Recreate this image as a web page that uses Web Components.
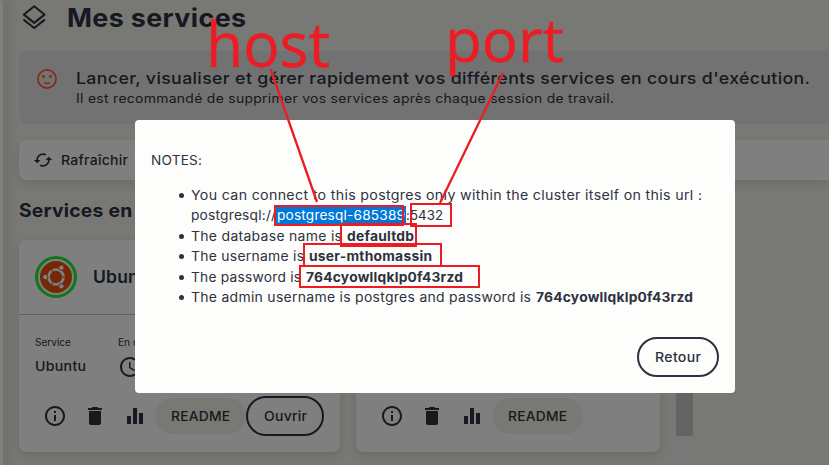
<!DOCTYPE html>
<html lang="fr">
<head>
<meta charset="utf-8">
<title>Mes services</title>
<style>
html,body{margin:0;padding:0;overflow:hidden}
body{font-family:Inter,"Liberation Sans",sans-serif;color:#2c323f;background:#f1f0e8}
</style>
</head>
<body>
<services-page></services-page>
<script>
const make = (name, html, setup) => customElements.define(name, class extends HTMLElement {
  connectedCallback() {
    if (this.shadowRoot) return;
    const t = document.createElement('template');
    t.innerHTML = html;
    this.attachShadow({mode: 'open'}).appendChild(t.content.cloneNode(true));
    if (setup) setup(this, this.shadowRoot);
  }
});

// Text widened to the width in its w attribute: partly by tracking, the rest by glyph width.
make('fit-text', `<style>:host{display:inline-block;white-space:pre;line-height:inherit}span{display:inline-block;transform-origin:0 50%}</style><span></span>`, (el, root) => {
  const s = root.querySelector('span');
  s.textContent = el.getAttribute('text');
  const w = +el.getAttribute('w');
  const n = s.textContent.length;
  const natural = s.getBoundingClientRect().width;
  const spacing = (w - natural) / n * 0.35;
  s.style.letterSpacing = spacing + 'px';
  s.style.transform = `scaleX(${w / (natural + spacing * (n - 1))})`;
  el.style.width = w + 'px';
});

const icons = {
  layers: ['0 0 24 24', '<path d="M12.200 1.200 22.500 9.600 12.200 17.900 1.900 9.600Z M1.500 14.600 12.200 23 22.900 14.600" fill="none" stroke="currentColor" stroke-width="2" stroke-linejoin="round"/>'],
  smile: ['0 0 24 24', '<circle cx="12" cy="12" r="9.1" fill="none" stroke="currentColor" stroke-width="1.6"/><circle cx="8.5" cy="9.5" r="1.4" fill="currentColor"/><circle cx="15.5" cy="9.5" r="1.4" fill="currentColor"/><path d="M9.2 15.7q2.8 1.7 5.6 0" fill="none" stroke="currentColor" stroke-width="1.4"/>'],
  refresh: ['0 0 24 24', '<path d="M19 8l-4 4h3c0 3.31-2.69 6-6 6-1.01 0-1.97-.25-2.8-.7l-1.46 1.46C8.97 19.54 10.43 20 12 20c4.42 0 8-3.58 8-8h3l-4-4zM6 12c0-3.31 2.69-6 6-6 1.01 0 1.97.25 2.8.7l1.46-1.46C15.03 4.46 13.57 4 12 4c-4.42 0-8 3.58-8 8H1l4 4 4-4H6z" fill="currentColor"/>'],
  info: ['0 0 24 24', '<path d="M11 7h2v2h-2zm0 4h2v6h-2zm1-9C6.48 2 2 6.48 2 12s4.480 10 10 10 10-4.480 10-10S17.520 2 12 2zm0 18c-4.410 0-8-3.590-8-8s3.590-8 8-8 8 3.590 8 8-3.590 8-8 8z" fill="currentColor"/>'],
  trash: ['0 0 24 24', '<path d="M6 19c0 1.100.9 2 2 2h8c1.100 0 2-.9 2-2V7H6v12zM19 4h-3.500l-1-1h-5l-1 1H5v2h14V4z" fill="currentColor"/>'],
  bars: ['0 0 24 24', '<path d="M4 12h4v8H4zM10 4h4v16h-4zM16 9h4v11h-4z" fill="currentColor"/>'],
  clock: ['0 0 24 24', '<path d="M11.990 2C6.470 2 2 6.480 2 12s4.470 10 9.990 10C17.520 22 22 17.520 22 12S17.520 2 11.990 2zM12 20c-4.420 0-8-3.580-8-8s3.580-8 8-8 8 3.580 8 8-3.580 8-8 8zm.5-13H11v6l5.250 3.150.75-1.230-4.500-2.670z" fill="currentColor"/>'],
  ubuntu: ['0 0 32 32', '<circle cx="16" cy="16" r="16" fill="#e9500e"/><circle cx="16" cy="16" r="7.5" fill="none" stroke="#fff" stroke-width="2.7"/><g stroke="#e9500e" stroke-width="1.1"><path d="M16 16H27"/><path d="M16 16 10.500 6.500"/><path d="M16 16 10.500 25.500"/></g><circle cx="16" cy="16" r="5.5" fill="#e9500e"/><g fill="#fff" stroke="#e9500e" stroke-width="1"><circle cx="5.300" cy="16" r="2.700"/><circle cx="21.400" cy="6.700" r="2.700"/><circle cx="21.400" cy="25.300" r="2.700"/></g>']
};
make('ui-icon', `<style>:host{display:block;flex:none;width:24px;height:24px}svg{display:block;width:100%;height:100%}</style>`, (el, root) => {
  const [box, body] = icons[el.getAttribute('name')];
  root.appendChild(document.createRange().createContextualFragment(`<svg viewBox="${box}">${body}</svg>`));
});

make('pill-button', `<style>
:host{display:flex;flex:none;box-sizing:border-box;align-items:center;justify-content:center;height:40px;border-radius:20px;border:2px solid #2c323f;font-size:13px;font-weight:500;line-height:20px}
:host([soft]){height:36px;width:91px;background:#f1f0e8;border:0}
</style><slot></slot>`);

make('page-header', `<style>
:host{display:flex;height:51px;box-sizing:border-box;padding:2px 0 0 3px;gap:21px}
ui-icon{margin-top:3px}
fit-text{font-size:25.500px;font-weight:700;line-height:32px}
</style><ui-icon name="layers"></ui-icon><fit-text text="Mes services" w="179"></fit-text>`);

make('info-banner', `<style>
:host{display:flex;height:73px;box-sizing:border-box;background:#e5e5e5;border-radius:8px 0 0 8px;padding:16px 0 0 16px;gap:17px}
ui-icon{color:#ff562c}
div{display:flex;flex-direction:column}
.t{font-size:16.500px;font-weight:500;line-height:22px}
.s{font-size:12.800px;line-height:20px}
</style><ui-icon name="smile"></ui-icon><div><fit-text class="t" text="Lancer, visualiser et gérer rapidement vos différents services en cours d'exécution." w="734"></fit-text><fit-text class="s" text="Il est recommandé de supprimer vos services après chaque session de travail." w="538"></fit-text></div>`);

make('tool-bar', `<style>
:host{display:flex;align-items:center;height:40px;margin-top:16px;box-sizing:border-box;background:#fff;border-radius:8px 0 0 8px;padding-left:14px;gap:8px;box-shadow:0 4px 10px rgba(44,50,63,.12);font-size:13px;font-weight:500}
ui-icon{width:20px;height:20px}
</style><ui-icon name="refresh"></ui-icon><fit-text text="Rafraîchir" w="67"></fit-text>`);

make('service-card', `<style>
:host{display:flex;flex-direction:column;flex:none;box-sizing:border-box;height:212px;border-radius:8px;background:#fff;box-shadow:0 4px 10px rgba(44,50,63,.14)}
.head{display:flex;align-items:center;height:75px;box-sizing:border-box;border-bottom:1px solid #c0c0c2;padding-left:16px;gap:16px;font-size:17px;font-weight:600}
.avatar{box-sizing:border-box;width:42px;height:42px;border:3px solid #22ec2c;border-radius:50%;padding:2px}
.avatar ui-icon{width:32px;height:32px}
.facts{display:flex;height:81px;box-sizing:border-box;padding:20px 0 0 16px;gap:32px}
.facts div{display:flex;flex-direction:column}
.l{font-size:10.200px;line-height:15px}
.v{font-size:13.200px;font-weight:500;line-height:20px;margin-top:6px}
.clock{margin:5px 0 0 0}
.actions{display:flex;align-items:center;height:40px;padding-left:16px}
.b{width:40px;height:40px;display:flex;align-items:center;justify-content:center}
</style>
<div class="head"><div class="avatar"><ui-icon name="ubuntu"></ui-icon></div><fit-text text="Ubuntu" w="63"></fit-text></div>
<div class="facts"><div><fit-text class="l" text="Service" w="36"></fit-text><fit-text class="v" text="Ubuntu" w="51"></fit-text></div><div><fit-text class="l" text="En cours" w="42"></fit-text><ui-icon class="clock" name="clock"></ui-icon></div></div>
<div class="actions"><div class="b"><ui-icon name="info"></ui-icon></div><div class="b"><ui-icon name="trash"></ui-icon></div><div class="b"><ui-icon name="bars"></ui-icon></div><pill-button soft><fit-text text="README" w="59"></fit-text></pill-button><slot></slot></div>`);

make('scroll-rail', `<style>
:host{display:block;flex:none;width:17px;height:240px;background:#f1f1f1}
div{height:196px;background:#c9c9c9}
</style><div></div>`);

make('notes-dialog', `<style>
:host{display:flex;flex-direction:column;box-sizing:border-box;width:600px;height:273px;border-radius:4px;background:#fdfdfc;padding:30px 16px 16px;font-size:13px;line-height:20.500px}
fit-text{vertical-align:top}
ul{margin:14px 0 0;padding:0 0 0 40px;list-style:none}
li{position:relative;height:20.500px;white-space:nowrap;display:flex}
li.two{height:41px;flex-wrap:wrap}
li::before{content:"";position:absolute;left:-12.500px;top:8px;width:5px;height:5px;border-radius:50%;background:#2c323f}
b{font-weight:700;margin-left:5px}
.sel{background:#0078d7;color:#fff;height:18px;line-height:18px;margin-top:1px;padding:0 1px}
.row{display:flex}
footer{display:flex;justify-content:flex-end;margin-top:auto}
pill-button{width:82px}
</style>
<div><fit-text text="NOTES:" w="51"></fit-text></div>
<ul>
<li class="two"><fit-text text="You can connect to this postgres only within the cluster itself on this url :" w="511"></fit-text><div class="row"><fit-text text="postgresql://" w="85"></fit-text><fit-text class="sel" text="postgresql-685389" w="128"></fit-text><fit-text text=":5432" w="37"></fit-text></div></li>
<li><fit-text text="The database name is" w="151"></fit-text><b><fit-text text="defaultdb" w="67"></fit-text></b></li>
<li><fit-text text="The username is" w="113"></fit-text><b><fit-text text="user-mthomassin" w="123"></fit-text></b></li>
<li><fit-text text="The password is" w="110"></fit-text><b><fit-text text="764cyowllqklp0f43rzd" w="157"></fit-text></b></li>
<li><fit-text text="The admin username is postgres and password is" w="340"></fit-text><b><fit-text text="764cyowllqklp0f43rzd" w="157"></fit-text></b></li>
</ul>
<footer><pill-button><fit-text text="Retour" w="46"></fit-text></pill-button></footer>`);

// Hand-drawn markings laid over the dialog.
make('red-marks', `<style>
:host{position:absolute;inset:0;pointer-events:none}
svg{display:block}
text{font-family:"Open Sans","Noto Sans",sans-serif;fill:#ed1c24;stroke:#ed1c24;stroke-width:.4px}
</style><svg width="829" height="465" viewBox="0 0 829 465">
<g fill="none" stroke="#ed1c24" stroke-width="2">
<rect x="275" y="206" width="128" height="19"/><rect x="411" y="204" width="40" height="22"/><rect x="341" y="224" width="75" height="22"/><rect x="304" y="244" width="137" height="22"/><rect x="300" y="266" width="179" height="21"/>
<path d="M270.500 69 317 202M503 73 440 203" stroke-width="2.300"/></g>
<text x="206" y="67" font-size="61.500" textLength="124" lengthAdjust="spacingAndGlyphs">host</text>
<text x="445" y="61.500" font-size="60" textLength="119" lengthAdjust="spacingAndGlyphs">port</text>
</svg>`);

make('services-page', `<style>
:host{display:block;position:relative;width:829px;height:465px;overflow:hidden;background:#f1f0e8}
.app{display:grid;grid-template-columns:3px 1fr;height:465px}
nav{background:#fff;border-radius:0 8px 0 0;box-shadow:2px 0 12px rgba(44,50,63,.36);z-index:1}
main{padding-left:16px;min-width:0}
h2{margin:0;height:60px;display:flex;align-items:center;font-size:18.500px;font-weight:700}
.cards{display:flex;gap:16px}
service-card:first-child{width:321px}
service-card:nth-child(2){width:304px}
pill-button{width:78px}
.veil{position:absolute;inset:0;background:rgba(0,0,0,.5);z-index:2;display:flex;align-items:flex-start;padding:120px 0 0 135px;box-sizing:border-box}
notes-dialog{flex:none}
red-marks{z-index:3}
</style>
<div class="app"><nav></nav><main>
<page-header></page-header><info-banner></info-banner><tool-bar></tool-bar>
<h2><fit-text text="Services en cours" w="173"></fit-text></h2>
<div class="cards"><service-card><pill-button><fit-text text="Ouvrir" w="43"></fit-text></pill-button></service-card><service-card></service-card><scroll-rail></scroll-rail></div>
</main></div>
<div class="veil"><notes-dialog></notes-dialog></div>
<red-marks></red-marks>`);
</script>
</body>
</html>
